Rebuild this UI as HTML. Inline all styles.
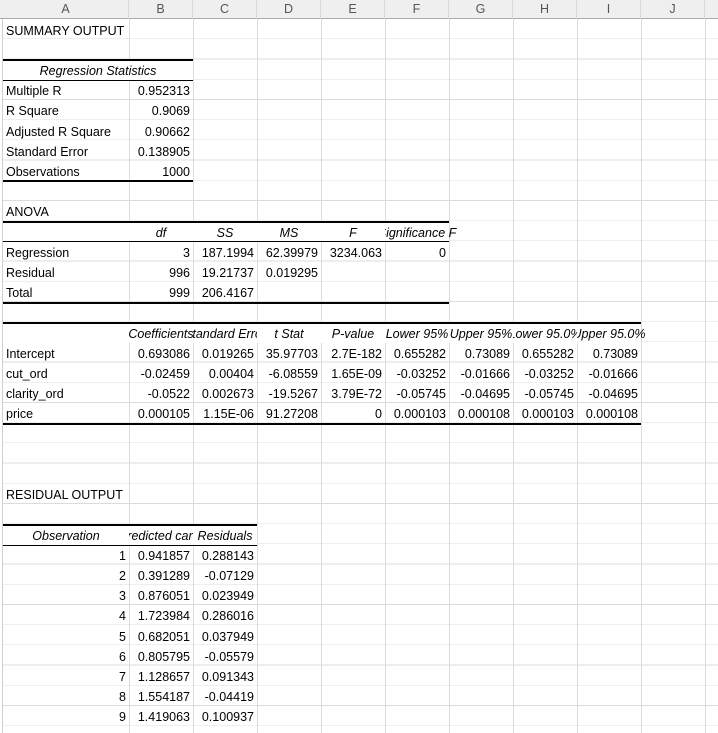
<!DOCTYPE html>
<html><head><meta charset="utf-8"><style>
*{margin:0;padding:0;box-sizing:border-box}
body{width:718px;height:733px;overflow:hidden;background:#fff;position:relative;font-family:"Liberation Sans",Arial,sans-serif;font-size:12.5px;color:#000}
.hdr{position:absolute;top:0;left:0;width:718px;height:19px;background:#efefef;border-bottom:1px solid #ababab}
.hl{position:absolute;top:0;font-size:12.5px;color:#555;line-height:19px;text-align:center;width:64px;border-right:1px solid #d8d8d8;height:19px}
.gh{position:absolute;left:3px;top:19px;width:715px;height:714px;background:repeating-linear-gradient(to bottom,transparent 0,transparent 19.5px,#dcdcdc 19.5px,#dcdcdc 20.2px)}
.gv{position:absolute;left:129px;top:19px;width:589px;height:714px;background:repeating-linear-gradient(to right,#dcdcdc 0,#dcdcdc 1px,transparent 1px,transparent 64px)}
.lv{position:absolute;left:2px;top:19px;width:1px;height:714px;background:#cfcfcf}
.w{position:absolute;background:#fff;height:19px}
.b{position:absolute;background:#000;left:3px}
.c{position:absolute;height:20.2px;line-height:23px;white-space:nowrap;overflow:hidden}
.l{padding-left:3px}
.r{text-align:right;padding-right:3px}
.A{left:3px;width:126px}.B{left:129px;width:64px}.C{left:193px;width:64px}.D{left:257px;width:64px}.E{left:321px;width:64px}.F{left:385px;width:64px}.G{left:449px;width:64px}.H{left:513px;width:64px}.I{left:577px;width:64px}
.it{font-style:italic}
.ctr span{position:absolute;transform:translateX(-50%)}
</style></head><body>
<div class="hdr"></div>
<div class="hl" style="left:3px;width:126px">A</div>
<div class="hl" style="left:129px">B</div><div class="hl" style="left:193px">C</div><div class="hl" style="left:257px">D</div><div class="hl" style="left:321px">E</div><div class="hl" style="left:385px">F</div><div class="hl" style="left:449px">G</div><div class="hl" style="left:513px">H</div><div class="hl" style="left:577px">I</div><div class="hl" style="left:641px">J</div>
<div class="gh"></div><div class="gv"></div><div class="lv"></div>
<div class="w" style="left:3px;width:190px;top:61px"></div>
<div class="w" style="left:3px;width:446px;top:222.5px"></div>
<div class="w" style="left:3px;width:638px;top:323.5px"></div>
<div class="w" style="left:3px;width:254px;top:525.5px"></div>

<div class="b" style="top:59px;width:190px;height:2px"></div>
<div class="b" style="top:80px;width:190px;height:1px"></div>
<div class="b" style="top:180px;width:190px;height:2px"></div>
<div class="b" style="top:221px;width:446px;height:2px"></div>
<div class="b" style="top:241px;width:446px;height:1px"></div>
<div class="b" style="top:301.5px;width:446px;height:2px"></div>
<div class="b" style="top:322px;width:638px;height:2px"></div>
<div class="b" style="top:423px;width:638px;height:2px"></div>
<div class="b" style="top:524px;width:254px;height:2px"></div>
<div class="b" style="top:545px;width:254px;height:1px"></div>

<div class="c l A" style="top:19.5px">SUMMARY OUTPUT</div>
<div class="c it" style="top:59.9px;left:3px;width:190px;text-align:center">Regression Statistics</div>
<div class="c l A" style="top:80.1px">Multiple R</div><div class="c r B" style="top:80.1px">0.952313</div>
<div class="c l A" style="top:100.3px">R Square</div><div class="c r B" style="top:100.3px">0.9069</div>
<div class="c l A" style="top:120.5px">Adjusted R Square</div><div class="c r B" style="top:120.5px">0.90662</div>
<div class="c l A" style="top:140.7px">Standard Error</div><div class="c r B" style="top:140.7px">0.138905</div>
<div class="c l A" style="top:160.9px">Observations</div><div class="c r B" style="top:160.9px">1000</div>

<div class="c l A" style="top:201.3px">ANOVA</div>
<div class="c it ctr B" style="top:221.5px"><span style="left:32px">df</span></div>
<div class="c it ctr C" style="top:221.5px"><span style="left:32px">SS</span></div>
<div class="c it ctr D" style="top:221.5px"><span style="left:32px">MS</span></div>
<div class="c it ctr E" style="top:221.5px"><span style="left:32px">F</span></div>
<div class="c it ctr" style="top:221.5px;left:385px;width:120px"><span style="left:32px">Significance F</span></div>
<div class="c l A" style="top:241.7px">Regression</div><div class="c r B" style="top:241.7px">3</div><div class="c r C" style="top:241.7px">187.1994</div><div class="c r D" style="top:241.7px">62.39979</div><div class="c r E" style="top:241.7px">3234.063</div><div class="c r F" style="top:241.7px">0</div>
<div class="c l A" style="top:261.9px">Residual</div><div class="c r B" style="top:261.9px">996</div><div class="c r C" style="top:261.9px">19.21737</div><div class="c r D" style="top:261.9px">0.019295</div>
<div class="c l A" style="top:282.1px">Total</div><div class="c r B" style="top:282.1px">999</div><div class="c r C" style="top:282.1px">206.4167</div>

<div class="c it ctr" style="top:322.5px;left:3px;width:190px"><span style="left:158px">Coefficients</span></div>
<div class="c it ctr C" style="top:322.5px"><span style="left:32px">Standard Error</span></div>
<div class="c it ctr D" style="top:322.5px"><span style="left:32px">t Stat</span></div>
<div class="c it ctr E" style="top:322.5px"><span style="left:32px">P-value</span></div>
<div class="c it ctr F" style="top:322.5px"><span style="left:32px">Lower 95%</span></div>
<div class="c it ctr G" style="top:322.5px"><span style="left:32px">Upper 95%</span></div>
<div class="c it ctr H" style="top:322.5px"><span style="left:32px">Lower 95.0%</span></div>
<div class="c it ctr" style="top:322.5px;left:577px;width:120px"><span style="left:32px">Upper 95.0%</span></div>

<div class="c l A" style="top:342.7px">Intercept</div><div class="c r B" style="top:342.7px">0.693086</div><div class="c r C" style="top:342.7px">0.019265</div><div class="c r D" style="top:342.7px">35.97703</div><div class="c r E" style="top:342.7px">2.7E-182</div><div class="c r F" style="top:342.7px">0.655282</div><div class="c r G" style="top:342.7px">0.73089</div><div class="c r H" style="top:342.7px">0.655282</div><div class="c r I" style="top:342.7px">0.73089</div>
<div class="c l A" style="top:362.9px">cut_ord</div><div class="c r B" style="top:362.9px">-0.02459</div><div class="c r C" style="top:362.9px">0.00404</div><div class="c r D" style="top:362.9px">-6.08559</div><div class="c r E" style="top:362.9px">1.65E-09</div><div class="c r F" style="top:362.9px">-0.03252</div><div class="c r G" style="top:362.9px">-0.01666</div><div class="c r H" style="top:362.9px">-0.03252</div><div class="c r I" style="top:362.9px">-0.01666</div>
<div class="c l A" style="top:383.1px">clarity_ord</div><div class="c r B" style="top:383.1px">-0.0522</div><div class="c r C" style="top:383.1px">0.002673</div><div class="c r D" style="top:383.1px">-19.5267</div><div class="c r E" style="top:383.1px">3.79E-72</div><div class="c r F" style="top:383.1px">-0.05745</div><div class="c r G" style="top:383.1px">-0.04695</div><div class="c r H" style="top:383.1px">-0.05745</div><div class="c r I" style="top:383.1px">-0.04695</div>
<div class="c l A" style="top:403.3px">price</div><div class="c r B" style="top:403.3px">0.000105</div><div class="c r C" style="top:403.3px">1.15E-06</div><div class="c r D" style="top:403.3px">91.27208</div><div class="c r E" style="top:403.3px">0</div><div class="c r F" style="top:403.3px">0.000103</div><div class="c r G" style="top:403.3px">0.000108</div><div class="c r H" style="top:403.3px">0.000103</div><div class="c r I" style="top:403.3px">0.000108</div>

<div class="c l A" style="top:484.1px">RESIDUAL OUTPUT</div>
<div class="c it ctr A" style="top:524.5px"><span style="left:63px">Observation</span></div>
<div class="c it ctr B" style="top:524.5px"><span style="left:32px">Predicted carat</span></div>
<div class="c it ctr C" style="top:524.5px"><span style="left:32px">Residuals</span></div>

<div class="c r A" style="top:544.7px">1</div><div class="c r B" style="top:544.7px">0.941857</div><div class="c r C" style="top:544.7px">0.288143</div>
<div class="c r A" style="top:564.9px">2</div><div class="c r B" style="top:564.9px">0.391289</div><div class="c r C" style="top:564.9px">-0.07129</div>
<div class="c r A" style="top:585.1px">3</div><div class="c r B" style="top:585.1px">0.876051</div><div class="c r C" style="top:585.1px">0.023949</div>
<div class="c r A" style="top:605.3px">4</div><div class="c r B" style="top:605.3px">1.723984</div><div class="c r C" style="top:605.3px">0.286016</div>
<div class="c r A" style="top:625.5px">5</div><div class="c r B" style="top:625.5px">0.682051</div><div class="c r C" style="top:625.5px">0.037949</div>
<div class="c r A" style="top:645.7px">6</div><div class="c r B" style="top:645.7px">0.805795</div><div class="c r C" style="top:645.7px">-0.05579</div>
<div class="c r A" style="top:665.9px">7</div><div class="c r B" style="top:665.9px">1.128657</div><div class="c r C" style="top:665.9px">0.091343</div>
<div class="c r A" style="top:686.1px">8</div><div class="c r B" style="top:686.1px">1.554187</div><div class="c r C" style="top:686.1px">-0.04419</div>
<div class="c r A" style="top:706.3px">9</div><div class="c r B" style="top:706.3px">1.419063</div><div class="c r C" style="top:706.3px">0.100937</div>
</body></html>
